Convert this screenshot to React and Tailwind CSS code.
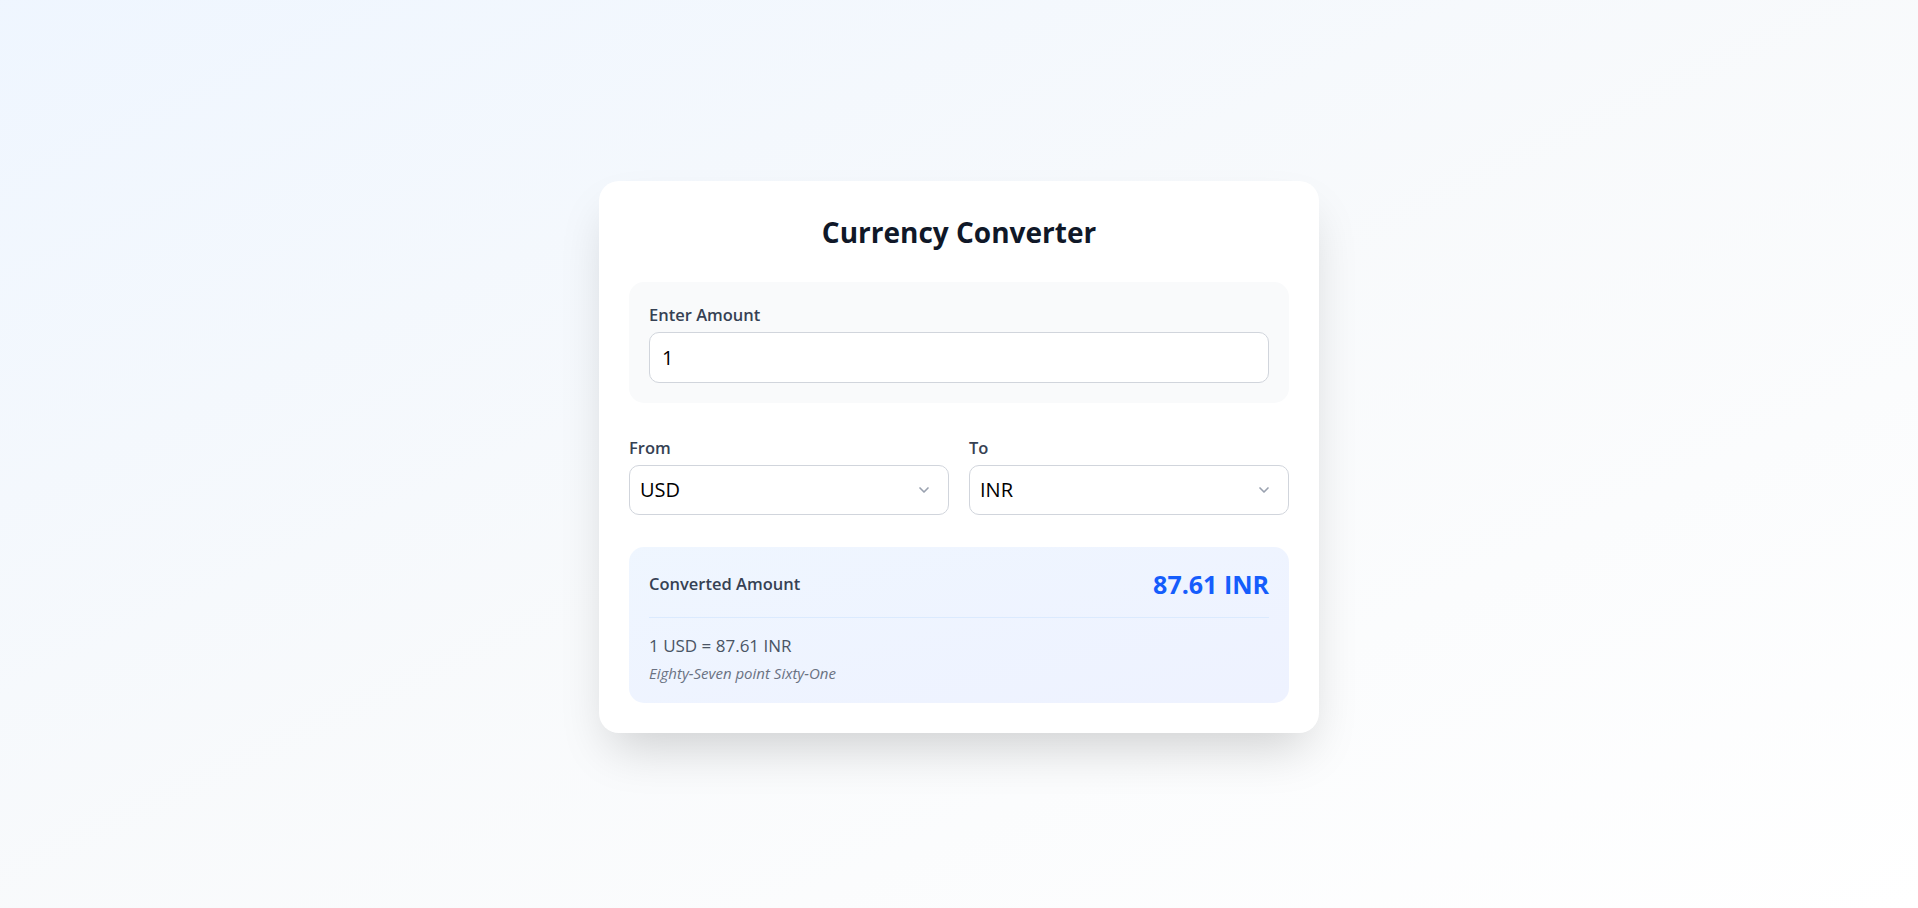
import React, { useState } from 'react';
import { ChevronDown } from 'lucide-react';

const currencies = ['USD', 'INR', 'EUR', 'GBP', 'JPY'];

const App = () => {
    const [amount, setAmount] = useState('1');
    const [from, setFrom] = useState('USD');
    const [to, setTo] = useState('INR');

    return (
        <div className="min-h-screen pt-[5px] flex items-center justify-center bg-gradient-to-br from-blue-50 via-slate-50 to-white font-['Open_Sans',sans-serif]">
            <div className="w-[720px] bg-white rounded-[20px] px-[30px] pt-[31px] pb-[30px] shadow-[0_25px_50px_-12px_rgba(0,0,0,0.18)]">
                <h1 className="text-center text-[28px] leading-[40px] font-bold text-gray-900 mb-[30px]">Currency Converter</h1>

                {/* Amount */}
                <div className="bg-gray-50 rounded-[15px] p-5">
                    <label className="block text-[16.5px] leading-[25px] font-semibold text-gray-700 mb-[5px]">Enter Amount</label>
                    <input
                        value={amount}
                        onChange={(e) => setAmount(e.target.value)}
                        className="w-full h-[51px] bg-white border border-gray-300 rounded-[10px] px-3 text-[20px] text-black outline-none"
                    />
                </div>

                {/* From / To */}
                <div className="grid grid-cols-2 gap-5 mt-[32px]">
                    {[
                        { label: 'From', value: from, set: setFrom },
                        { label: 'To', value: to, set: setTo },
                    ].map((f) => (
                        <div key={f.label}>
                            <label className="block text-[16.5px] leading-[25px] font-semibold text-gray-700 mb-[5px]">{f.label}</label>
                            <div className="relative">
                                <select
                                    value={f.value}
                                    onChange={(e) => f.set(e.target.value)}
                                    className="appearance-none w-full h-[50px] bg-white border border-gray-300 rounded-[10px] pl-2.5 pr-10 text-[20px] text-black outline-none"
                                >
                                    {currencies.map((c) => <option key={c}>{c}</option>)}
                                </select>
                                <ChevronDown className="absolute right-[17px] top-1/2 -translate-y-1/2 w-4 h-4 text-gray-400 pointer-events-none" strokeWidth={2.5} />
                            </div>
                        </div>
                    ))}
                </div>

                {/* Result */}
                <div className="mt-[32px] rounded-[15px] p-5 bg-gradient-to-br from-blue-50 to-indigo-50">
                    <div className="flex items-center justify-between pb-[15px] border-b border-blue-100">
                        <span className="text-[16.5px] font-semibold text-gray-700">Converted Amount</span>
                        <span className="text-[25px] leading-[35px] font-bold text-blue-600">87.61 INR</span>
                    </div>
                    <p className="mt-[15px] text-[17px] leading-[25px] text-gray-600">1 USD = 87.61 INR</p>
                    <p className="mt-[5px] text-[15px] leading-[20px] italic text-gray-500">Eighty-Seven point Sixty-One</p>
                </div>
            </div>
        </div>
    );
};

export default App;
